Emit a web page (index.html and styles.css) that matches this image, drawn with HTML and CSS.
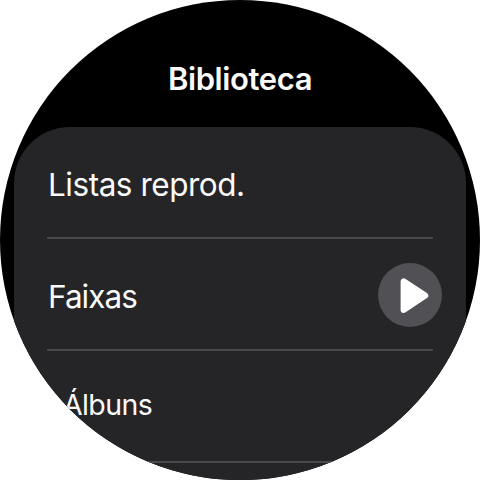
FILE: index.html
```html
<!DOCTYPE html>
<html lang="pt"><head><meta charset="utf-8"><title>Biblioteca</title><link rel="stylesheet" href="styles.css"></head>
<body>
<main class="watch">
<h1 class="title"><span class="title-text">Biblioteca</span></h1>
<ul class="list">
<li class="row"><span class="label">Listas reprod.</span></li>
<li class="row"><span class="label label-tight">Faixas</span>
<button class="play" aria-label="Faixas"><svg viewBox="0 0 64 64"><path d="M25.600 18.300v28.600L47.300 32.600z" fill="#fff" stroke="#fff" stroke-width="6" stroke-linejoin="round"/></svg></button></li>
<li class="row"><span class="label label-receding">Álbuns</span></li>
</ul>
</main>
</body></html>
```
FILE: styles.css
```css
* { box-sizing: border-box; }
body { margin: 0; background: #fff; font-family: Inter, sans-serif; }
.watch { width: 480px; height: 480px; border-radius: 50%; overflow: hidden; background: #000; color: #fafafa; }
.title { margin: 0; height: 127px; padding-top: 57px; font-size: 31px; line-height: 44px; font-weight: 600; letter-spacing: -0.4px; text-align: center; }
.title-text, .label { display: inline-block; white-space: nowrap; }
.list { list-style: none; margin: 0 14px; padding: 0 33px; height: 400px; background: #252527; border-radius: 56px 56px 0 0; }
.row { height: 112px; padding: 2px 0 0; display: flex; align-items: center; justify-content: space-between; border-bottom: 2px solid #4a4a4c; }
.label { margin: 4px 0 0 1px; font-size: 31.5px; line-height: 42px; letter-spacing: -0.47px; }
.label-tight { letter-spacing: -0.95px; }
.label-receding { margin: -4px 0 0 16px; font-size: 28.5px; letter-spacing: -0.6px; }
.play { width: 64px; height: 64px; margin: 0 -9px 0 0; padding: 0; border: 0; border-radius: 50%; background: #505055; }
.play svg { display: block; width: 64px; height: 64px; }
```
